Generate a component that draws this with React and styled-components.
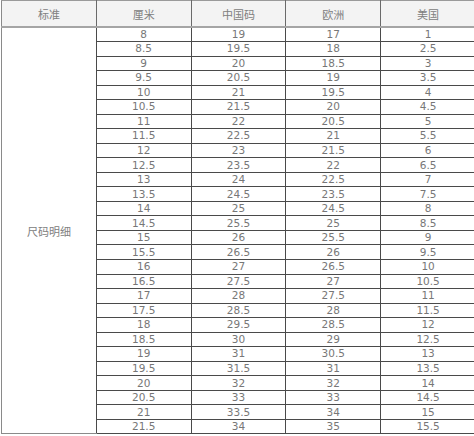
import React from "react";
import styled, { createGlobalStyle } from "styled-components";

const GlobalStyle = createGlobalStyle`
  html, body {
    margin: 0;
    padding: 0;
    background: #fff;
    overflow: hidden;
  }
`;

const cm = [];
for (let v = 8; v <= 21.5; v += 0.5) cm.push(v);

const china = [
  19, 19.5, 20, 20.5, 21, 21.5, 22, 22.5, 23, 23.5, 24, 24.5, 25, 25.5, 26,
  26.5, 27, 27.5, 28, 28.5, 29.5, 30, 31, 31.5, 32, 33, 33.5, 34,
];
const europe = [
  17, 18, 18.5, 19, 19.5, 20, 20.5, 21, 21.5, 22, 22.5, 23.5, 24.5, 25, 25.5,
  26, 26.5, 27, 27.5, 28, 28.5, 29, 30.5, 31, 32, 33, 34, 35,
];
const usa = [
  1, 2.5, 3, 3.5, 4, 4.5, 5, 5.5, 6, 6.5, 7, 7.5, 8, 8.5, 9, 9.5, 10, 10.5,
  11, 11.5, 12, 12.5, 13, 13.5, 14, 14.5, 15, 15.5,
];

const headers = ["标准", "厘米", "中国码", "欧洲", "美国"];

const SizeChart = () => (
  <Page>
    <Table>
      <colgroup>
        {headers.map((h) => (
          <col key={h} style={{ width: "94.8px" }} />
        ))}
      </colgroup>
      <thead>
        <tr>
          {headers.map((h) => (
            <HeadCell key={h}>{h}</HeadCell>
          ))}
        </tr>
      </thead>
      <tbody>
        {cm.map((c, i) => (
          <Row key={c}>
            {i === 0 && <LabelCell rowSpan={cm.length}>尺码明细</LabelCell>}
            <Cell>{c}</Cell>
            <Cell>{china[i]}</Cell>
            <Cell>{europe[i]}</Cell>
            <Cell>{usa[i]}</Cell>
          </Row>
        ))}
      </tbody>
    </Table>
  </Page>
);

export default function App() {
  return (
    <>
      <GlobalStyle />
      <SizeChart />
    </>
  );
}

const Page = styled.div`
  padding-left: 1px;
  width: 480px;
`;

const Table = styled.table`
  width: 475px;
  table-layout: fixed;
  border-collapse: collapse;
  color: #777;
  font-family: "DejaVu Sans", Verdana, "Noto Sans CJK SC", sans-serif;
  font-size: 10.5px;
  border-left: 1px solid #8a8a8a;
  border-top: 1px solid #9a9a9a;
`;

const HeadCell = styled.th`
  height: 25px;
  padding: 0;
  background: #f3f3f3;
  font-weight: normal;
  font-size: 11px;
  font-family: "Noto Sans CJK SC", sans-serif;
  color: #808080;
  text-align: center;
  border-right: 1px solid #6a6a6a;
  border-bottom: 2px solid #a5a5a5;
`;

const Row = styled.tr`
  height: 14.54px;
`;

const Cell = styled.td`
  padding: 0;
  line-height: 13px;
  text-align: center;
  border-right: 1px solid #4a4a4a;
  border-bottom: 1px solid #4a4a4a;
`;

const LabelCell = styled.td`
  padding: 0;
  text-align: center;
  vertical-align: middle;
  background: #fff;
  font-family: "Noto Sans CJK SC", sans-serif;
  font-size: 11px;
  color: #808080;
  border-right: 1px solid #4a4a4a;
  border-bottom: 1px solid #8a8a8a;
`;
